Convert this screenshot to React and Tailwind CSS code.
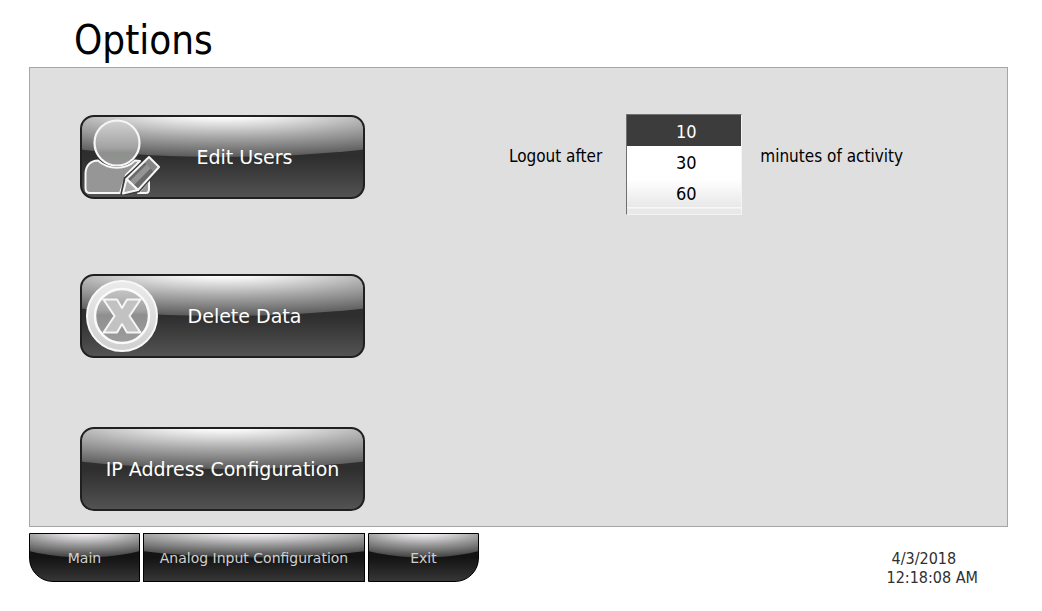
import React from "react";

const uiFont = "font-['DejaVu_Sans_Condensed','Noto_Sans',sans-serif]";
const buttonFont = "font-['DejaVu_Sans','Noto_Sans',sans-serif]";

function UserEditIcon() {
  return (
    <svg viewBox="1 0 76 76" className="size-[76px]" aria-hidden="true">
      <defs>
        <linearGradient id="userHead" x1="0" y1="0" x2="0" y2="1">
          <stop offset="0" stopColor="#d2d2d2" />
          <stop offset="0.6" stopColor="#a3a3a3" />
          <stop offset="0.72" stopColor="#8e908e" />
          <stop offset="1" stopColor="#929492" />
        </linearGradient>
      </defs>
      <path
        d="M7 74C4 74 2.500 72 2.500 69V54C3 46 8 41.500 15 41.500C25 51 43 51 52 41.500L57 42L43 56L37 74Z"
        fill="#969696"
        stroke="#f6f6f6"
        strokeWidth="2"
        strokeLinejoin="round"
      />
      <path d="M55 74H63C65 74 66 72 66 70V61Z" fill="#969696" stroke="#f6f6f6" strokeWidth="2" strokeLinejoin="round" />
      <path d="M43 60L66 40L75 49L55 71L40 74Z" fill="#3a3a3a" stroke="#3a3a3a" strokeWidth="5" strokeLinejoin="round" />
      <circle cx="34" cy="24" r="22.500" fill="url(#userHead)" stroke="#f6f6f6" strokeWidth="2.200" />
      <path d="M43.500 60L66 38L76 48L55 71Z" fill="#6a6a6a" />
      <path d="M47 62L67 42L71 46L51 66Z" fill="#949494" />
      <path d="M61 43L66 38L76 48L71 53Z" fill="#858585" />
      <path d="M43.500 60L55 71L40 74.500Z" fill="#ababab" stroke="#f6f6f6" strokeWidth="2" strokeLinejoin="round" />
      <path d="M43.500 60L66 38L76 48L55 71Z" fill="none" stroke="#f6f6f6" strokeWidth="2" strokeLinejoin="round" />
    </svg>
  );
}

function DeleteIcon() {
  return (
    <svg viewBox="0 0 76 76" className="size-[76px]" aria-hidden="true">
      <defs>
        <linearGradient id="deleteRing" x1="0" y1="0" x2="0" y2="1">
          <stop offset="0" stopColor="#ebebeb" />
          <stop offset="1" stopColor="#cfcfcf" />
        </linearGradient>
        <linearGradient id="deleteDisc" x1="0" y1="0" x2="0" y2="1">
          <stop offset="0" stopColor="#c6c6c6" />
          <stop offset="0.4" stopColor="#a2a2a2" />
          <stop offset="0.48" stopColor="#8e908e" />
          <stop offset="1" stopColor="#9c9c9c" />
        </linearGradient>
      </defs>
      <circle cx="38" cy="38" r="35" fill="url(#deleteRing)" stroke="#f8f8f8" strokeWidth="2" />
      <circle cx="38" cy="38" r="27" fill="url(#deleteDisc)" stroke="#fafafa" strokeWidth="2.500" />
      <path
        d="M19.500 21.500H33L38 30L43 21.500H56.500L45.500 38L56.500 54.500H43L38 46L33 54.500H19.500L30.500 38Z"
        fill="#c2c2c2"
        stroke="#f6f6f6"
        strokeWidth="2"
        strokeLinejoin="round"
      />
    </svg>
  );
}

function OptionButton({ icon, label, className = "" }) {
  return (
    <button
      type="button"
      className={`relative flex h-[84px] w-[285px] items-center overflow-hidden rounded-[14px] border-2 border-[#202020] bg-linear-to-b from-[#2d2e2d] from-50% to-[#525352] text-[19px] text-white ${buttonFont} ${className}`}
    >
      <span className="absolute inset-0 bg-[radial-gradient(ellipse_110%_60%_at_50%_-8%,#ffffff_13%,#a8a8a8_55%,#545454)] [clip-path:ellipse(130%_120%_at_50%_-70%)]" />
      {icon && <span className="absolute inset-y-0 left-0 flex items-center pl-0.5">{icon}</span>}
      <span className={`relative flex-1 text-center ${icon ? "pl-11" : ""}`}>{label}</span>
    </button>
  );
}

function NavButton({ label, className }) {
  return (
    <button
      type="button"
      className={`relative flex h-[49px] items-center justify-center overflow-hidden border border-black bg-linear-to-b from-[#141414] from-50% to-[#363636] text-sm text-[#d0d0d0] ${buttonFont} ${className}`}
    >
      <span className="absolute inset-0 bg-[radial-gradient(ellipse_110%_60%_at_50%_-8%,#f4f0f4_13%,#949494_55%,#3a3a3a)] [clip-path:ellipse(110%_120%_at_50%_-70%)]" />
      <span className="relative">{label}</span>
    </button>
  );
}

export default function App() {
  return (
    <div className={`min-h-screen bg-white pr-[34px] pl-[29px] text-black ${uiFont}`}>
      <h1 className="flex h-[67px] items-center pt-3 pl-[45px] text-[40px]">Options</h1>
      <main className="flex items-start justify-between border border-[#a6a6a6] bg-[#dfdfdf] pt-[46px] pr-[104px] pb-[15px] pl-[50px]">
        <div className="flex flex-col pt-px">
          <OptionButton icon={<UserEditIcon />} label="Edit Users" />
          <OptionButton icon={<DeleteIcon />} label="Delete Data" className="mt-[75px]" />
          <OptionButton label="IP Address Configuration" className="mt-[69px]" />
        </div>
        <div className="flex items-start text-[17px] leading-6">
          <label htmlFor="timeout" className="pt-[30px] pr-6">
            Logout after
          </label>
          <select
            id="timeout"
            size={3}
            defaultValue="10"
            className="h-[101px] w-[116px] appearance-none overflow-hidden border border-t-[#707070] border-r-[#f4f4f4] border-b-[#f4f4f4] border-l-[#707070] bg-[linear-gradient(#ffffff_65%,#e8e8e8_93%,#f8f8f8_93%,#f8f8f8_94%,#e8e8e8_95%)] p-0 text-center text-lg outline-none"
          >
            {["10", "30", "60"].map((minutes) => (
              <option
                key={minutes}
                className="flex h-[31px] min-h-0 items-center justify-center p-0 pt-0.5 pl-1 text-center checked:bg-[linear-gradient(#3c3c3c,#3c3c3c)] checked:text-white!"
              >
                {minutes}
              </option>
            ))}
          </select>
          <span className="pt-[30px] pl-[18px]">minutes of activity</span>
        </div>
      </main>
      <footer className="flex items-start justify-between pt-[6px]">
        <nav className="flex gap-[3px]">
          <NavButton label="Main" className="w-[111px] rounded-bl-[24px]" />
          <NavButton label="Analog Input Configuration" className="w-[222px]" />
          <NavButton label="Exit" className="w-[111px] rounded-br-[24px]" />
        </nav>
        <p className="pt-[16px] pr-[30px] text-base leading-[19px] text-[#303030]">
          <span className="block pl-[5px]">4/3/2018</span>
          <span className="block">12:18:08 AM</span>
        </p>
      </footer>
    </div>
  );
}
